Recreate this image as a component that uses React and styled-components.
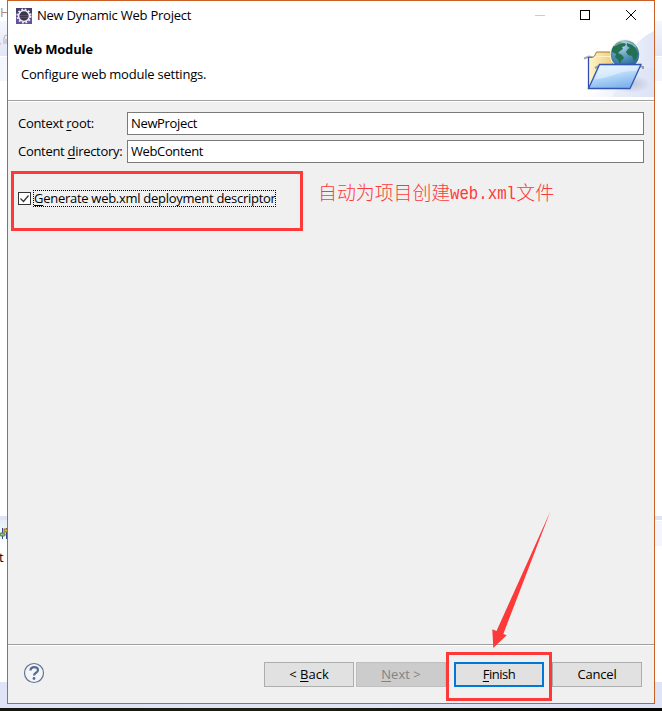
import React from "react";
import styled, { createGlobalStyle } from "styled-components";

const GlobalStyle = createGlobalStyle`
  * { box-sizing: border-box; }
  body { margin: 0; background: #fff; overflow: hidden; }
`;

const Screen = styled.div`
  position: relative;
  width: 662px;
  height: 711px;
  overflow: hidden;
  background: #fff;
  color: #000;
  font: 13px/18px "Open Sans", "Noto Sans", sans-serif;
`;

const Desktop = styled.div`
  display: grid;
  grid-template-columns: 7px 648px 7px;
  height: 704px;
`;

const Strip = styled.div`
  display: flex;
  flex-direction: column;
  overflow: hidden;
`;

const Band = styled.div`
  flex: none;
  height: ${(p) => p.$h}px;
  background: ${(p) => p.$bg || "#fff"};
  overflow: hidden;
  white-space: nowrap;
  color: ${(p) => p.$color || "#000"};
  line-height: ${(p) => p.$lh || p.$h}px;
  text-indent: ${(p) => p.$indent || 0}px;
  svg { display: block; }
`;

const StatusEdge = styled.div`
  height: 4px;
  background: #dfe4f6;
`;

const Taskbar = styled.div`
  height: 3px;
  background: linear-gradient(90deg, #15160f, #1d2010 45%, #050505 90%);
`;

const Dialog = styled.section`
  display: flex;
  flex-direction: column;
  height: 704px;
  border: 1px solid #cb5f28;
  background: #f0f0f0;
`;

const TitleBar = styled.header`
  display: flex;
  align-items: center;
  height: 29px;
  padding-left: 8px;
  background: #fff;
`;

const WindowTitle = styled.div`
  flex: 1;
  padding: 0 0 2px 5px;
`;

const WindowControls = styled.div`
  display: flex;
  height: 29px;
`;

const Banner = styled.div`
  display: flex;
  justify-content: space-between;
  height: 72px;
  background: #fff;
  border-bottom: 1px solid #fff;
  box-shadow: inset 0 -1px #a0a0a0;
`;

const BannerText = styled.div`
  padding: 10px 0 0 6px;
`;

const Heading = styled.h1`
  margin: 0;
  font-size: 13px;
  line-height: 18px;
  font-weight: 700;
`;

const Description = styled.p`
  margin: 7px 0 0 7px;
`;

const Text = styled.span`
  display: inline-block;
  white-space: nowrap;
  letter-spacing: ${(p) => p.$ls || 0}px;
`;

const Key = styled.span`
  text-decoration: underline;
  text-decoration-thickness: 1px;
  text-underline-offset: 2px;
  text-decoration-skip-ink: none;
`;

const Form = styled.div`
  display: grid;
  grid-template-columns: 109px 517px;
  row-gap: 5px;
  padding: 10px 0 0 10px;
`;

const Label = styled.label`
  line-height: 23px;
`;

const Field = styled.div`
  height: 23px;
  padding-left: 3px;
  border: 1px solid #7a7a7a;
  background: #fff;
  line-height: 21px;
`;

const CheckRow = styled.div`
  display: flex;
  align-items: center;
  height: 17px;
  margin: 27px 0 0 10px;
`;

const CheckBox = styled.span`
  width: 13px;
  height: 13px;
  margin-right: 2px;
  border: 1px solid #333;
  background: #fff;
  svg { display: block; }
`;

const FocusLabel = styled.span`
  width: 243px;
  height: 17px;
  border: 1px dotted #000;
  line-height: 15px;
`;

const Footer = styled.footer`
  display: flex;
  align-items: flex-start;
  height: 59px;
  margin-top: auto;
  border-top: 1px solid #a0a0a0;
  box-shadow: inset 0 1px #fff;
  padding: 17px 12px 0 15px;
`;

const HelpIcon = styled.svg`
  margin-right: auto;
`;

const Buttons = styled.div`
  display: flex;
  gap: 8px;
`;

const Pager = styled.div`
  display: flex;
  gap: 2px;
`;

const Button = styled.div`
  width: 90px;
  height: 25px;
  border: ${(p) => (p.$primary ? "2px solid #0078d7" : p.$disabled ? "1px solid #bfbfbf" : "1px solid #adadad")};
  background: ${(p) => (p.$disabled ? "#ccc" : "#e1e1e1")};
  color: ${(p) => (p.$disabled ? "#838383" : "#000")};
  line-height: ${(p) => (p.$primary ? 21 : 23)}px;
  text-align: center;
`;

const Highlight = styled.div`
  position: absolute;
  left: ${(p) => p.$x}px;
  top: ${(p) => p.$y}px;
  width: ${(p) => p.$w}px;
  height: ${(p) => p.$h}px;
  border: 3px solid #fd3939;
`;

const Note = styled.div`
  position: absolute;
  display: flex;
  left: 318px;
  top: 179px;
  color: #fd3939;
  font: 300 18.9px/25px "Noto Sans CJK SC", sans-serif;
  white-space: nowrap;
`;

const NoteLatin = styled.span`
  font: 19px/30px "Liberation Mono", monospace;
  transform: scaleX(0.827);
  transform-origin: left;
  width: 66px;
`;

const Arrow = styled.svg`
  position: absolute;
  left: 485px;
  top: 505px;
`;

function EclipseIcon() {
  return (
    <svg width="16" height="16" viewBox="0 0 16 16">
      <rect width="16" height="16" fill="#65509a" />
      <path d="M0 0h16v5H0z" fill="#463c6c" />
      <circle cx="8" cy="8" r="6.5" fill="none" stroke="#eeeaf5" strokeWidth="2" strokeDasharray="1.7 1.7" />
      <circle cx="8" cy="8" r="5.4" fill="#3b364c" stroke="#f2eff7" strokeWidth="1.500" />
      <path d="M4 9.5h8M4 7.5h8" stroke="#575068" />
    </svg>
  );
}

function WizardArt() {
  return (
    <svg width="74" height="70" viewBox="580 30 74 70">
      <defs>
        <linearGradient id="sweep" x1="0" x2="1">
          <stop offset="0" stopColor="#fff" />
          <stop offset="1" stopColor="#e0e6f7" />
        </linearGradient>
        <linearGradient id="folder" x1="0" y1="0" x2=".4" y2="1">
          <stop offset="0" stopColor="#e4f3ff" />
          <stop offset=".5" stopColor="#bcdcfa" />
          <stop offset="1" stopColor="#82b5ef" />
        </linearGradient>
        <linearGradient id="paper" x1="0" x2="1">
          <stop offset="0" stopColor="#fff6cd" />
          <stop offset="1" stopColor="#efcd7c" />
        </linearGradient>
        <radialGradient id="globe" cx=".4" cy=".2" r=".85">
          <stop offset="0" stopColor="#b4d6ea" />
          <stop offset=".5" stopColor="#5595bb" />
          <stop offset="1" stopColor="#245b91" />
        </radialGradient>
        <radialGradient id="shade">
          <stop offset="0" stopColor="#8994b2" stopOpacity=".4" />
          <stop offset="1" stopColor="#8994b2" stopOpacity="0" />
        </radialGradient>
      </defs>
      <path d="M582 97c20-3 27-15 40-30 10-20 19-30 32-36v66z" fill="url(#sweep)" />
      <path d="M612 97c9-16 22-26 42-30v30z" fill="#d5ddf3" opacity=".3" />
      <ellipse cx="633" cy="84" rx="17" ry="9" fill="url(#shade)" />
      <path d="M584 58.500l5-2 4 1" fill="none" stroke="#a9a9ad" strokeWidth="2" />
      <path d="M588.500 88V57.500h4l2-1.500 2-4h14l2 3v32z" fill="url(#paper)" stroke="#a8781d" />
      <path d="M590 58.500h5l3-2h12" fill="none" stroke="#fff3c9" />
      <path d="M588.500 57v31.500" stroke="#334fae" strokeWidth="1.300" />
      <circle cx="625" cy="54.500" r="15.200" fill="#f8f3d9" />
      <circle cx="625" cy="54.500" r="14.200" fill="url(#globe)" />
      <path d="M612 49c2-4 4-6 8-7l4 1 2 1-1 2-3 1 1 2-3 2-2 2 4 2 2 3-3 3-1 3-2-4-3-3 1-3-4-2zM627 43l5 1 4 5 2 5-2 5-2 2-2-5-4-1-2-3 2-3 2-1-3-2z" fill="#237052" />
      <path d="M614 46q11-8 22 1" fill="none" stroke="#c2dfed" strokeWidth="1.500" opacity=".5" />
      <path d="M595 68l4-2M639 66l4 1v2" fill="none" stroke="#9a9da7" strokeWidth="2" />
      <path d="M588.500 88.500l11-24h41.500l-11 24z" fill="url(#folder)" stroke="#3156b2" strokeWidth="1.300" />
      <path d="M600.500 66h38l-2 5c-18-1-27 8-42 8z" fill="#fff" opacity=".4" />
    </svg>
  );
}

export default function App() {
  return (
    <Screen>
      <GlobalStyle />
      <Desktop>
        <Strip>
          <Band $h={21} $lh={24} $indent={0} $color="#a58c86">H</Band>
          <Band $h={35} $bg="linear-gradient(#f5f7fd,#e2e6f5)">
            <svg width="7" height="35"><path d="M0 23h1M4 23v-6q0-3 3-3M6 23v-5" stroke="#b4b4b4" fill="none" /></svg>
          </Band>
          <Band $h={1} />
          <Band $h={24} $bg="#f4f6fd" />
          <Band $h={435} />
          <Band $h={4} $bg="#dfe4f5" />
          <Band $h={25} $bg="linear-gradient(#e5eef4,#fff)">
            <svg width="7" height="25">
              <path d="M2.500 8v11M6.500 8v11" stroke="#34448e" />
              <rect x="0" y="13" width="5" height="3" rx="1" fill="#98c478" stroke="#417948" />
              <rect x="4" y="9" width="5" height="3" fill="#e0b443" stroke="#946b1c" />
            </svg>
          </Band>
          <Band $h={25} $indent={-1}>t</Band>
          <Band $h={112} />
          <Band $h={22} $bg="#dfe4f6" />
        </Strip>

        <Dialog>
          <TitleBar>
            <EclipseIcon />
            <WindowTitle><Text $ls={-0.24}>New Dynamic Web Project</Text></WindowTitle>
            <WindowControls>
              <svg width="138" height="29" viewBox="516 1 138 29" fill="none" shapeRendering="crispEdges">
                <path d="M535 15.500h10" stroke="#ccc" />
                <rect x="580.500" y="10.500" width="9" height="9" stroke="#000" />
                <path d="M626 10l10 10M636 10l-10 10" stroke="#000" shapeRendering="auto" />
              </svg>
            </WindowControls>
          </TitleBar>
          <Banner>
            <BannerText>
              <Heading><Text $ls={-0.18}>Web Module</Text></Heading>
              <Description><Text $ls={-0.22}>Configure web module settings.</Text></Description>
            </BannerText>
            <WizardArt />
          </Banner>
          <Form>
            <Label><Text $ls={-0.3}>Context <Key>r</Key>oot:</Text></Label>
            <Field><Text $ls={-0.35}>NewProject</Text></Field>
            <Label><Text $ls={-0.3}>Content <Key>d</Key>irectory:</Text></Label>
            <Field><Text $ls={-0.38}>WebContent</Text></Field>
          </Form>
          <CheckRow>
            <CheckBox>
              <svg width="11" height="11"><path d="M1.500 5.500l3 3L9.500 2.500" fill="none" stroke="#333" strokeWidth="1.200" /></svg>
            </CheckBox>
            <FocusLabel><Text $ls={-0.28}><Key>G</Key>enerate web.xml deployment descriptor</Text></FocusLabel>
          </CheckRow>
          <Footer>
            <HelpIcon width="22" height="22" viewBox="0 0 22 22">
              <circle cx="11" cy="11" r="9.500" fill="#f4f5f8" stroke="#637394" strokeWidth="1.200" />
              <path d="M7.500 8.500C7.500 4 15 4 15 8c0 3-4 2.500-4 5.500" fill="none" stroke="#566b91" strokeWidth="2.200" />
              <circle cx="11" cy="16.500" r="1.400" fill="#566b91" />
            </HelpIcon>
            <Buttons>
              <Pager>
                <Button><Text>&lt; <Key>B</Key>ack</Text></Button>
                <Button $disabled><Text><Key>N</Key>ext &gt;</Text></Button>
              </Pager>
              <Button $primary><Text $ls={-0.5}><Key>F</Key>inish</Text></Button>
              <Button><Text $ls={-0.2}>Cancel</Text></Button>
            </Buttons>
          </Footer>
        </Dialog>

        <Strip>
          <Band $h={21} />
          <Band $h={35} $bg="linear-gradient(#f5f7fd,#e2e6f5)" />
          <Band $h={1} />
          <Band $h={24} $bg="#f4f6fd" />
          <Band $h={435} />
          <Band $h={4} $bg="#dfe4f5" />
          <Band $h={1} />
          <Band $h={25} $bg="#f5f6fd" />
          <Band $h={136} />
          <Band $h={22} $bg="#dfe4f6" />
        </Strip>
      </Desktop>
      <StatusEdge />
      <Taskbar />

      <Highlight $x={11} $y={171} $w={292} $h={60} />
      <Note>自动为项目创建<NoteLatin>web.xml</NoteLatin>文件</Note>
      <Highlight $x={446} $y={652} $w={106} $h={49} />
      <Arrow width="70" height="145" viewBox="485 505 70 145">
        <path d="M550.500 511L503.300 634l3.400 1.300L493.300 648l-1-18.700 4.200 1.700z" fill="#fd3939" />
      </Arrow>
    </Screen>
  );
}
